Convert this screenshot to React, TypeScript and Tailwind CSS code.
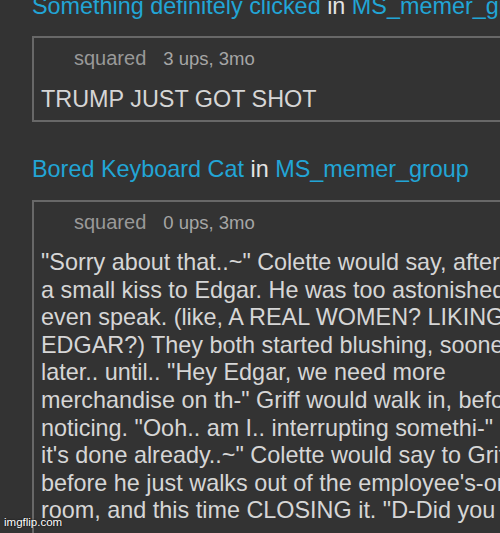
import React from "react"

const body = [
  "\"Sorry about that..~\" Colette would say, after giving",
  "a small kiss to Edgar. He was too astonished to",
  "even speak. (like, A REAL WOMEN? LIKING",
  "EDGAR?) They both started blushing, sooner or",
  "later.. until.. \"Hey Edgar, we need more",
  "merchandise on th-\" Griff would walk in, before",
  "noticing. \"Ooh.. am I.. interrupting somethi-\" \"Oh,",
  "it's done already..~\" Colette would say to Griff,",
  "before he just walks out of the employee's-only",
  "room, and this time CLOSING it. \"D-Did you",
]

function Heading({ user, group }: { user: string; group: string }) {
  return (
    <div className="whitespace-nowrap text-[23.4px] leading-[28px]">
      <span className="text-[#22a5d6]">{user}</span>
      <span className="text-[#e4e4e4]"> in </span>
      <span className="text-[#22a5d6]">{group}</span>
    </div>
  )
}

function Meta({ ups }: { ups: string }) {
  return (
    <div className="flex items-baseline gap-[17px] pl-[40px] leading-[24px]">
      <span className="text-[20px] text-[#999999]">squared</span>
      <span className="text-[18.5px] text-[#a6a6a6]">{ups}</span>
    </div>
  )
}

export default function App() {
  return (
    <div
      className="relative h-[533px] w-[500px] overflow-hidden bg-[#333333] pl-[32px]"
      style={{ fontFamily: '"Liberation Sans", Arial, sans-serif' }}
    >
      <div className="-mt-[8px]">
        <Heading user="Something definitely clicked" group="MS_memer_group" />
      </div>

      <div className="mt-[16px] w-[500px] border-2 border-r-0 border-[#686868] pt-[8px] pb-[7px]">
        <Meta ups="3 ups, 3mo" />
        <div className="mt-[14px] whitespace-nowrap pl-[7px] text-[23.4px] leading-[28px] text-[#d6d6d6]">
          TRUMP JUST GOT SHOT
        </div>
      </div>

      <div className="mt-[33px]">
        <Heading user="Bored Keyboard Cat" group="MS_memer_group" />
      </div>

      <div className="mt-[17px] w-[500px] border-2 border-r-0 border-b-0 border-[#686868] pt-[8px] pb-[20px]">
        <Meta ups="0 ups, 3mo" />
        <div className="mt-[14px] pl-[7px] text-[23.4px] leading-[27.6px] text-[#d6d6d6]">
          {body.map((line, i) => (
            <div key={i} className="whitespace-nowrap">
              {line}
            </div>
          ))}
        </div>
      </div>

      <div className="absolute bottom-[4px] left-[4px] text-[11.5px] leading-[13px] text-white [text-shadow:0_0_2px_#000]">
        imgflip.com
      </div>
    </div>
  )
}
